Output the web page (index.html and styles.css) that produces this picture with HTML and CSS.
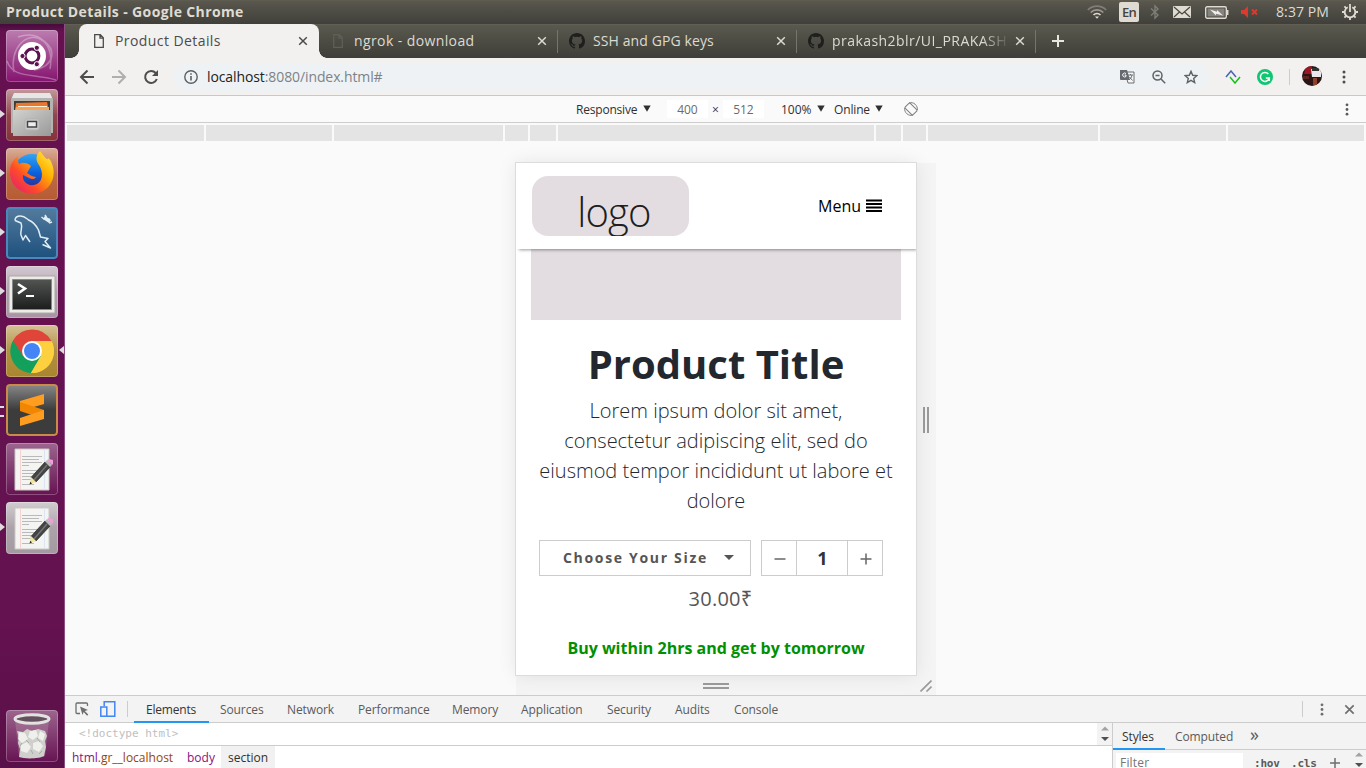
FILE: index.html
```html
<!DOCTYPE html>
<html lang="en">
<head>
<meta charset="utf-8">
<title>Product Details</title>
<link rel="stylesheet" href="styles.css">
</head>
<body>
<svg width="0" height="0" class="defs">
  <defs>
    <linearGradient id="steel" x1="0" y1="0" x2="1" y2="1"><stop offset="0" stop-color="#d2d2d0"/><stop offset="1" stop-color="#999"/></linearGradient>
    <linearGradient id="fox" x1="1" y1="0" x2="0" y2="1"><stop offset="0" stop-color="#fff44f"/><stop offset=".35" stop-color="#ffb000"/><stop offset=".65" stop-color="#ff4a2a"/><stop offset="1" stop-color="#e0167e"/></linearGradient>
    <linearGradient id="globe" x1="0" y1="0" x2="0" y2="1"><stop offset="0" stop-color="#2fa4f4"/><stop offset=".5" stop-color="#0a62dd"/><stop offset="1" stop-color="#3a1a7c"/></linearGradient>
    <linearGradient id="screen" x1="0" y1="0" x2="0" y2="1"><stop offset="0" stop-color="#525452"/><stop offset="1" stop-color="#1c1e1d"/></linearGradient>
    <clipPath id="logoClip"><rect width="157" height="60" rx="16"/></clipPath>
    <symbol id="x" viewBox="0 0 10 10"><path d="M1.2 1.2l7.6 7.6M8.8 1.2L1.2 8.8" stroke="currentColor" stroke-width="1.5"/></symbol>
    <symbol id="page" viewBox="0 0 12 16"><path d="M1.7 1.7h5.6l3 3v9.6H1.7zM7 1.7v3.4h3.4" fill="none" stroke="currentColor" stroke-width="1.3"/></symbol>
    <symbol id="github" viewBox="0 0 16 16"><path fill="#1f1f1e" d="M8 0C3.58 0 0 3.58 0 8c0 3.54 2.29 6.53 5.47 7.59.4.07.55-.17.55-.38 0-.19-.01-.82-.01-1.49-2.01.37-2.53-.49-2.69-.94-.09-.23-.48-.94-.82-1.13-.28-.15-.68-.52-.01-.53.63-.01 1.08.58 1.23.82.72 1.21 1.87.87 2.33.66.07-.52.28-.87.51-1.07-1.78-.2-3.64-.89-3.64-3.95 0-.87.31-1.59.82-2.15-.08-.2-.36-1.02.08-2.12 0 0 .67-.21 2.2.82a7.6 7.6 0 014 0c1.53-1.04 2.2-.82 2.2-.82.44 1.1.16 1.92.08 2.12.51.56.82 1.27.82 2.15 0 3.07-1.87 3.75-3.65 3.95.29.25.54.73.54 1.48 0 1.07-.01 1.93-.01 2.2 0 .21.15.46.55.38A8 8 0 0016 8c0-4.42-3.58-8-8-8z"/></symbol>
    <symbol id="dots" viewBox="0 0 4 14"><circle cx="2" cy="2" r="1.5" fill="currentColor"/><circle cx="2" cy="7" r="1.5" fill="currentColor"/><circle cx="2" cy="12" r="1.5" fill="currentColor"/></symbol>
    <symbol id="down" viewBox="0 0 8 7"><path d="M.3.5h7.4L4 6.8z" fill="currentColor"/></symbol>
    <symbol id="gedit" viewBox="0 0 52 52">
      <path d="M9 6h34v41H9z" fill="#f4f4f2" stroke="#c9c9c5"/>
      <path d="M14.500 6v41" stroke="#f6d3d0"/><path d="M38.500 6v41" stroke="#dbe5f3"/>
      <path d="M16 13.500h20M16 16.500h17M16 19.500h20M16 22.500h7M16 27.500h19M16 30.500h14M16 33.500h12M16 36.500h9M16 41.500h12" stroke="#b9b9b9"/>
      <path d="M25 34.500L39 19l5 5-14 15z" fill="#444" stroke="#222" stroke-width=".7"/><path d="M28 37l13-15" stroke="#777" stroke-width="1.300"/>
      <path d="M25 34l5 5-6.500 2.500z" fill="#f1e49c"/><path d="M23.500 41.500l2.500-1-1.700-1.700z" fill="#222"/>
      <path d="M39 19l2-2 5 5-2 2z" fill="#bbb"/><path d="M41 17l2-1 4 1 0 4-1 1z" fill="#ef9fd8"/>
    </symbol>
  </defs>
</svg>

<header class="panel">
  <span class="panel-title">Product Details - Google Chrome</span>
  <div class="indicators">
    <svg class="wifi" viewBox="0 0 20 14" fill="none" stroke-width="1.700"><path d="M.8 5a13 13 0 0118.400 0" stroke="#7f7d77"/><path d="M3.700 7.500a9 9 0 0112.600 0" stroke="#9c9a93"/><path d="M6.500 10a5 5 0 017 0" stroke="#dfdbd2"/><path d="M8 11.600h4L10 13.800z" fill="#dfdbd2" stroke="none"/></svg>
    <span class="lang">En</span>
    <svg class="bt" viewBox="0 0 10 16" fill="none" stroke="#7f7d77" stroke-width="1.400"><path d="M1 4.500l7 6.500-3 3V2l3 3-7 6.500"/></svg>
    <svg class="mail" viewBox="0 0 18 12"><rect width="18" height="12" rx="1" fill="#dfdbd2"/><path d="M1 1l8 7 8-7M1 11l5.500-5M17 11l-5.500-5" fill="none" stroke="#484740" stroke-width="1.200"/></svg>
    <svg class="battery" viewBox="0 0 24 13"><rect x=".7" y=".7" width="20.600" height="11.600" rx="1.500" fill="none" stroke="#dfdbd2" stroke-width="1.400"/><rect x="2.500" y="2.500" width="17" height="8" fill="#85837b"/><path d="M22.700 4v5" stroke="#dfdbd2" stroke-width="1.500"/><path d="M5 3.500l7 2.200V4l6 5.500-7-1.700v1.700z" fill="#eee"/></svg>
    <svg class="mute" viewBox="0 0 18 12"><path d="M0 4h3l4-4v12L3 8H0z" fill="#df382c"/><path d="M11 3.500l5 5M16 3.500l-5 5" stroke="#df382c" stroke-width="1.900"/></svg>
    <span class="clock">8:37 PM</span>
    <svg class="gear" viewBox="0 0 16 16" fill="none" stroke="#dfdbd2"><path d="M5.600 3.200A5.300 5.300 0 108 2.700" stroke-width="0"/><path d="M5.700 3.300a5.300 5.300 0 104.600 0" stroke-width="1.800"/><path d="M8 0v8M8 13v3M0 8h3M13 8h3M2.400 2.400l2 2M13.600 2.400l-2 2M2.400 13.600l2-2M13.600 13.600l-2-2" stroke-width="1.800"/></svg>
  </div>
</header>

<div class="desktop">
  <nav class="launcher">
    <div class="app dash"><svg viewBox="0 0 52 52"><g fill="none" stroke="#fff" opacity=".3" stroke-width="1.500"><path d="M8 42C3 20 20 0 36 10s12 26-8 30"/><path d="M1 31c6 18 26 12 49 19M12 7c24-8 36 10 32 32"/></g><circle cx="26" cy="26" r="14" fill="#fff"/><circle cx="26" cy="26" r="6.900" fill="none" stroke="#5e1150" stroke-width="3"/><g fill="#5e1150" stroke="#fff" stroke-width="1"><circle cx="16.500" cy="26" r="2.600"/><circle cx="30.800" cy="17.800" r="2.600"/><circle cx="30.800" cy="34.200" r="2.600"/></g></svg></div>
    <div class="app files running"><svg viewBox="0 0 52 52"><path d="M8 4h36l3 6v34H5V10z" fill="#b4b4b2"/><path d="M8 4h36l2 5H6z" fill="#e6e6e4"/><path d="M8 12h36v10H8z" fill="#413a35"/><path d="M10 14l31-1 2 9H9z" fill="#e9772e"/><path d="M10 18h33v4H9z" fill="#f6a65b"/><path d="M12 17.500h29" stroke="#fff3df"/><path d="M7 21h38v26H7z" fill="url(#steel)"/><rect x="19" y="30" width="14" height="11" rx="2" fill="#ccc" stroke="#b3b3b3"/><rect x="21.500" y="32.500" width="9" height="5.500" fill="#eee" stroke="#444" stroke-width="1.500"/></svg></div>
    <div class="app firefox running"><svg viewBox="0 0 52 52"><circle cx="26" cy="25" r="19" fill="url(#globe)"/><path d="M34 3c-5 5-4 10-1 14 5 8 4 18-5 20-7 1-12-4-11-10l6 3c3 2 6 1 7-1-4 0-7-3-9-4l4-7c-4-4-9-4-12-2-1-2-1-5-1-8C5 13 2 22 5 31c4 12 18 18 30 13 12-5 15-18 11-28-1-4-3-5-4-6 0 3-3 0-8-7z" fill="url(#fox)"/></svg></div>
    <div class="app mysql running"><svg viewBox="0 0 52 52" fill="none" stroke="#dfeef7" stroke-width="1.500" stroke-linejoin="round"><path d="M9 13.500c0-3 2.500-4.500 5.500-4.500 4 0 6 2.500 8 4 5 2 8 6 10 10l2 7 7.500 1.500-3 3 5.500 6.500-8-3.500"/><path d="M9 13.500l6 2.500c2 4-1 8 0 12l2 5 2.500-4.500L24 35"/><path d="M38 10.500l6 4" stroke-width="3.500"/><path d="M35.500 10l2.500 2 2.500-1.500L39 8M42 13l1.500-1.500M43 16l3-1" stroke-width="1.500"/></svg></div>
    <div class="app term running"><svg viewBox="0 0 52 52"><path d="M3 10h46v37H3z" fill="#ecebe8" stroke="#aaa9a5"/><path d="M6.500 13.500h39v30h-39z" fill="url(#screen)" stroke="#888"/><path d="M12 18l7 4.500-7 5" fill="none" stroke="#fff" stroke-width="2.600"/><path d="M20 30h8" stroke="#fff" stroke-width="2"/></svg></div>
    <div class="app chrome running focused"><svg viewBox="0 0 52 52"><path d="M26 26L7 15.500A22 22 0 0145.500 16z" fill="#e0453a"/><path d="M26 26l19.500-10A22 22 0 0125 48z" fill="#fdd03f"/><path d="M26 26l-1 22A22 22 0 017 15.500z" fill="#12a05c"/><path d="M7 15.500l10 15.500 9-15z" fill="#e0453a"/><path d="M26 16h19.500L36 29z" fill="#fdd03f"/><path d="M17 31l8 17 10-17z" fill="#12a05c"/><path d="M25 48l10-17V18l10.500-2A22 22 0 0125 48z" fill="#fdd03f"/><circle cx="26" cy="26" r="10" fill="#fff"/><circle cx="26" cy="26" r="8" fill="#4385f4"/></svg></div>
    <div class="app sublime multi"><svg viewBox="0 0 52 52"><path d="M14 17l24-7v10l-24 7z" fill="#ff9d20"/><path d="M14 18l24 8v9l-24-8z" fill="#f18700"/><path d="M14 34l24-8v9l-24 7z" fill="#ff9d20"/></svg></div>
    <div class="app note"><svg viewBox="0 0 52 52"><use href="#gedit"/></svg></div>
    <div class="app note-open running"><svg viewBox="0 0 52 52"><use href="#gedit"/></svg></div>
    <div class="app trash"><svg viewBox="0 0 52 52"><path d="M9 10l4 36c4 3 22 3 26 0l4-36z" fill="#d9cbd8" opacity=".22"/><path d="M11 21l6 1 4-3 5 2 6-2 7 2 2 5-2 5 1 6-2 9c-5 3-20 3-25 1l1-8-2-6 1-5z" fill="#cfd0cb"/><g fill="#efefec"><path d="M13 22l6 1 3 6-6 4-4-4zM24 21l6-1 2 6-5 4-5-3zM34 21l5 3-2 7-5-3zM15 35l6-3 4 5-4 6-6-2zM27 33l6-2 4 5-4 6-6-3z"/></g><path d="M20 30l3 3M31 28l3 4M25 40l2 4M16 33l-2 3M36 41l-3 3" stroke="#a9aaa6"/><ellipse cx="26" cy="9" rx="17" ry="4.200" fill="#64505f" stroke="#e2e2df" stroke-width="3"/></svg></div>
  </nav>

  <main class="browser">
    <div class="tabs">
      <div class="tab active"><span class="fav"><svg class="pg" viewBox="0 0 12 16"><use href="#page"/></svg></span><span class="tab-name n1">Product Details</span><svg class="close"><use href="#x"/></svg></div>
      <div class="tab no-sep dim"><span class="fav"><svg class="pg" viewBox="0 0 12 16"><use href="#page"/></svg></span><span class="tab-name n2">ngrok - download</span><svg class="close"><use href="#x"/></svg></div>
      <div class="tab"><span class="fav"><svg class="gh"><use href="#github"/></svg></span><span class="tab-name n3">SSH and GPG keys</span><svg class="close"><use href="#x"/></svg></div>
      <div class="tab"><span class="fav"><svg class="gh"><use href="#github"/></svg></span><span class="tab-name faded">prakash2blr/UI_PRAKASH</span><svg class="close"><use href="#x"/></svg></div>
      <div class="new-tab"><svg viewBox="0 0 12 12"><path d="M6 0v12M0 6h12" stroke="#e8e6df" stroke-width="2"/></svg></div>
    </div>

    <div class="toolbar">
      <svg class="nav-i" viewBox="0 0 16 16" fill="none" stroke="#4d4d4d" stroke-width="2"><path d="M15 8H2M8.500 1.500L2 8l6.500 6.500"/></svg>
      <svg class="nav-i" viewBox="0 0 16 16" fill="none" stroke="#b0afac" stroke-width="2"><path d="M1 8h13M7.500 1.500L14 8l-6.500 6.500"/></svg>
      <svg class="nav-i" viewBox="0 0 16 16" fill="none" stroke="#4d4d4d" stroke-width="2"><path d="M13.800 10A6 6 0 1112.700 4L14 5.500"/><path d="M15 1v6H9z" fill="#4d4d4d" stroke="none"/></svg>
      <div class="omnibox">
        <svg class="info" viewBox="0 0 14 14"><circle cx="7" cy="7" r="6.200" fill="none" stroke="#5c6064" stroke-width="1.400"/><path d="M7 6v4.500M7 3.200v1.600" stroke="#5c6064" stroke-width="1.600"/></svg>
        <span class="url">localhost<span class="path">:8080/index.html#</span></span>
        <svg class="trans" viewBox="0 0 15 15"><path d="M5 3h9v11H8z" fill="#f5f6f6" stroke="#6b6f73"/><path d="M0 1h7l3 10H1a1 1 0 01-1-1z" fill="#66696d"/><path d="M8 6h5M10.500 5v1M12 6c-.5 3-2 4-3 5M9.500 8l3 3.500" stroke="#6b6f73" fill="none"/><path d="M6 4.500a2 2 0 100 3V6H4.500" fill="none" stroke="#fff"/></svg>
        <svg class="mag" viewBox="0 0 14 14" fill="none" stroke="#5f6368" stroke-width="1.500"><circle cx="5.500" cy="5.500" r="4.500"/><path d="M9 9l4.200 4.200M3.500 5.500h4"/></svg>
        <svg class="star" viewBox="0 0 14 14" fill="none" stroke="#5f6368" stroke-width="1.400"><path d="M7 1.300l1.700 4 4.200.3-3.200 2.800 1 4.200L7 10.300l-3.700 2.300 1-4.200L1.100 5.600l4.200-.3z"/></svg>
      </div>
      <svg class="ext" viewBox="0 0 16 14" fill="none" stroke-width="1.500"><path d="M1 7l5-6 5 6" stroke="#4a62b5"/><path d="M5 7l5 6 5-6" stroke="#13c313"/></svg>
      <svg class="gram" viewBox="0 0 16 16"><circle cx="8" cy="8" r="8" fill="#0fc671"/><path d="M11.400 5A4.500 4.500 0 1012.300 9H8.800M12.300 8.500v3.500" fill="none" stroke="#fff" stroke-width="1.500"/></svg>
      <i class="bar"></i>
      <svg class="avatar" viewBox="0 0 20 20"><clipPath id="av"><circle cx="10" cy="10" r="10"/></clipPath><g clip-path="url(#av)"><path d="M0 0h20v20H0z" fill="#2a1414"/><path d="M4 0h6v8H2z" fill="#9c1624"/><path d="M9 3h10v8H10z" fill="#e9e6ec"/><path d="M10 2h7v3h-7z" fill="#333"/><path d="M11 12h4v7h-4z" fill="#8e4028"/><path d="M1 10h6v3H1z" fill="#5c2320"/></g></svg>
      <svg class="kebab"><use href="#dots"/></svg>
    </div>

    <div class="device-bar">
      <span class="d-mode">Responsive</span><svg class="tri"><use href="#down"/></svg>
      <span class="dim-box first">400</span><span class="times">×</span><span class="dim-box">512</span>
      <span class="d-zoom">100%</span><svg class="tri"><use href="#down"/></svg>
      <span class="d-net">Online</span><svg class="tri"><use href="#down"/></svg>
      <svg class="rotate" viewBox="0 0 14 14" fill="none" stroke="#7e7e7e"><rect x="3.500" y="1.500" width="7" height="11" rx="1" transform="rotate(-45 7 7)"/><path d="M5 .9A6.500 6.500 0 0113.300 8M9 13.100A6.500 6.500 0 01.7 6"/></svg>
      <svg class="d-dots"><use href="#dots"/></svg>
    </div>
    <div class="ruler"><i></i><i></i><i></i><i></i><i></i><i></i><i></i><i></i><i></i><i></i><i></i></div>

    <div class="stage">
      <div class="phone">
        <div class="site-head">
          <svg class="logo" viewBox="0 0 157 60"><g clip-path="url(#logoClip)"><rect width="157" height="60" fill="#e3dde1"/><text x="82" y="51" text-anchor="middle" class="logo-text">logo</text></g></svg>
          <span class="menu">Menu<svg viewBox="0 0 16 13"><path d="M0 1.500h16M0 5h16M0 8.500h16M0 12h16" stroke="#000" stroke-width="2"/></svg></span>
        </div>
        <div class="hero"></div>
        <h1>Product Title</h1>
        <p class="lead">Lorem ipsum dolor sit amet,<br>consectetur adipiscing elit, sed do<br>eiusmod tempor incididunt ut labore et<br>dolore</p>
        <div class="buy-row">
          <div class="size"><span>Choose Your Size</span><i class="caret"></i></div>
          <div class="qty"><span><svg viewBox="0 0 12 12"><path d="M.5 6h11" stroke="#666" stroke-width="1.500"/></svg></span><b>1</b><span><svg viewBox="0 0 12 12"><path d="M.5 6h11M6 .5v11" stroke="#666" stroke-width="1.500"/></svg></span></div>
        </div>
        <div class="price">30.00₹</div>
        <div class="promo">Buy within 2hrs and get by tomorrow</div>
      </div>
      <div class="grip-r"><i></i></div>
      <div class="grip-b"><i></i></div>
      <div class="grip-c"><svg viewBox="0 0 12 12" stroke="#999" stroke-width="1.600"><path d="M.5 11.500l11-11M6.500 11.500l5-5"/></svg></div>
    </div>

    <div class="devtools">
      <div class="dt-bar">
        <svg class="inspect" viewBox="0 0 14 14"><path d="M5 11.500H2a1 1 0 01-1-1V2a1 1 0 011-1h9.500a1 1 0 011 1v2" fill="none" stroke="#6e6e6e" stroke-width="1.300"/><path d="M5 4.500l8 3.500-3.200 1 3.500 3.500-1.200 1.200L8.700 10 7.500 13z" fill="#6e6e6e"/></svg>
        <svg class="toggle" viewBox="0 0 16 16" fill="none" stroke="#4285f4" stroke-width="1.500"><path d="M4.200 5V.8h10.600v14.400H7"/><rect x=".8" y="6" width="6" height="9.200"/></svg>
        <i class="vsep"></i>
        <span class="t-el on">Elements</span><span class="t-so">Sources</span><span class="t-ne">Network</span><span class="t-pe">Performance</span><span class="t-me">Memory</span><span class="t-ap">Application</span><span class="t-se">Security</span><span class="t-au">Audits</span><span class="t-co">Console</span>
        <i class="vsep right"></i><svg class="dt-dots"><use href="#dots"/></svg><svg class="dt-x"><use href="#x"/></svg>
      </div>
      <div class="dt-body">
        <div class="dom">
          <div class="doctype"><code>&lt;!doctype html&gt;</code><div class="scroll"><svg viewBox="0 0 8 16"><path d="M0 4.500L4 .5l4 4z" fill="#a3a3a3"/><path d="M0 11l4 4 4-4z" fill="#505050"/></svg></div></div>
          <div class="crumbs"><span class="c1"><em>html</em>.gr__localhost</span><span class="c2">body</span><span class="c3">section</span></div>
        </div>
        <div class="side">
          <div class="side-tabs"><span class="s1">Styles</span><span class="s2">Computed</span><span class="s3">»</span></div>
          <div class="filter"><span class="field">Filter</span><code class="hov">:hov</code><code class="cls">.cls</code><svg class="plus" viewBox="0 0 10 10"><path d="M5 0v10M0 5h10" stroke="#6e6e6e" stroke-width="1.500"/></svg><div class="scroll"><svg viewBox="0 0 8 16"><path d="M0 4.500L4 .5l4 4z" fill="#a3a3a3"/><path d="M0 11l4 4 4-4z" fill="#505050"/></svg></div></div>
        </div>
      </div>
    </div>
  </main>
</div>
</body>
</html>
```
FILE: styles.css
```css
* { box-sizing: border-box; }
body { margin: 0; width: 1366px; height: 768px; overflow: hidden; display: flex; flex-direction: column; font-family: "Open Sans", "Noto Sans", sans-serif; background: #fafafa; }
svg { display: block; flex: none; }
.defs { position: absolute; }
span, code { white-space: nowrap; }

/* desktop panel */
.panel { height: 24px; flex: none; display: flex; align-items: center; justify-content: space-between; padding: 0 8px 0 6px; background: linear-gradient(#605e51 0, #58564d 2px, #403f39); color: #dfdbd2; }
.panel-title { font-weight: 700; font-size: 14px; letter-spacing: .38px; padding-bottom: 2px; }
.indicators { display: flex; align-items: center; }
.wifi { width: 20px; height: 14px; margin-right: 12px; }
.lang { width: 20px; height: 20px; margin-right: 11px; border-radius: 2px; background: #dfdbd2; color: #44433d; font-size: 13px; font-weight: 600; line-height: 20px; text-align: center; letter-spacing: -.7px; }
.bt { width: 10px; height: 16px; margin-right: 13px; }
.mail { width: 18px; height: 12px; margin-right: 14px; }
.battery { width: 24px; height: 13px; margin-right: 12px; }
.mute { width: 18px; height: 12px; margin-right: 17px; }
.clock { width: 66px; font-size: 14px; letter-spacing: .1px; padding-bottom: 2px; }
.gear { width: 16px; height: 16px; }

.desktop { flex: 1; display: flex; min-height: 0; }

/* launcher */
.launcher { width: 65px; flex: none; display: flex; flex-direction: column; gap: 7px; padding: 6px 0 6px 6px; background: linear-gradient(#470b3d, #66114f 8px, #641250 80%, #5a1048); border-right: 1px solid #8c4f80; }
.app { position: relative; width: 52px; height: 52px; border-radius: 4px; background-image: linear-gradient(rgba(255,255,255,.5), rgba(255,255,255,.1) 50%, rgba(255,255,255,0)); box-shadow: inset 0 0 0 1px rgba(255,255,255,.25); }
.app svg { width: 52px; height: 52px; }
.dash { background-color: #85136f; background-image: linear-gradient(rgba(255,255,255,.45), rgba(255,255,255,0)); }
.files { background-color: #85323a; }
.firefox { background-color: #b65b32; }
.mysql { background-color: #1c507d; background-image: linear-gradient(rgba(255,255,255,.25), rgba(255,255,255,0)); box-shadow: inset 0 0 0 2px #4b88bb; }
.term { background-color: #a894a4; }
.chrome { background-color: #a9852e; }
.sublime { background-color: #3c3c3c; background-image: linear-gradient(rgba(255,255,255,.4), rgba(255,255,255,0) 50%); box-shadow: inset 0 0 0 2px #c98a4a; }
.note { background-color: #671352; background-image: linear-gradient(rgba(255,255,255,.35), rgba(255,255,255,0)); }
.note-open { background-color: #a399a1; }
.trash { margin-top: auto; background-color: #671352; background-image: linear-gradient(rgba(255,255,255,.35), rgba(255,255,255,0)); }
.running::before { content: ""; position: absolute; left: -6px; top: 21px; border: solid transparent; border-width: 4px 0 4px 5px; border-left-color: #ddd; }
.focused::after { content: ""; position: absolute; right: -6px; top: 21px; border: solid transparent; border-width: 4px 5px 4px 0; border-right-color: #ddd; }
.multi::before { content: ""; position: absolute; left: -6px; top: 22px; width: 4px; height: 7px; border: solid #ddd; border-width: 2px 0; }

/* browser chrome */
.browser { flex: 1; min-width: 0; display: flex; flex-direction: column; }
.tabs { height: 34px; flex: none; display: flex; padding-left: 15px; background: linear-gradient(#69665a 0, #5a594f 1px, #3e3e38); color: #dcdad2; }
.tab { position: relative; width: 239px; display: flex; align-items: center; font-size: 14px; border-right: 1px solid #76746b; border-image: linear-gradient(transparent 7px, #76746b 7px, #76746b 28px, transparent 28px) 1; }
.tab.active { margin-left: -1px; width: 240px; padding-left: 1px; background: #f2f1f0; color: #4b4b4b; border: 0; border-radius: 8px 8px 0 0; }
.active::before, .active::after { content: ""; position: absolute; bottom: 0; width: 8px; height: 8px; }
.active::before { left: -8px; background: radial-gradient(circle at 0 0, transparent 7.5px, #f2f1f0 8px); }
.active::after { right: -8px; background: radial-gradient(circle at 100% 0, transparent 7.5px, #f2f1f0 8px); }
.fav { width: 35px; flex: none; padding-left: 11px; }
.pg { width: 12px; height: 16px; margin-left: 2px; }
.dim .pg { color: #5f5e57; }
.gh { width: 16px; height: 16px; }
.tab-name { width: 175px; overflow: hidden; padding-bottom: 2px; letter-spacing: .1px; }
.n1 { letter-spacing: .42px; }
.n2 { letter-spacing: .4px; }
.faded { letter-spacing: .45px; -webkit-mask-image: linear-gradient(90deg, #000 150px, transparent 178px); mask-image: linear-gradient(90deg, #000 150px, transparent 178px); }
.close { width: 10px; height: 10px; margin-left: 8px; }
.new-tab { padding: 11px 0 0 16px; }
.new-tab svg { width: 12px; height: 12px; }
.toolbar { height: 38px; flex: none; display: flex; align-items: center; padding-left: 14px; background: #f2f1f0; border-bottom: 1px solid #c8c8c7; }
.nav-i { width: 16px; height: 16px; margin-right: 16px; }
.omnibox { width: 1036px; height: 28px; margin-left: -2px; display: flex; align-items: center; border-radius: 14px; background: #eef2f4; padding-left: 11px; }
.info { width: 14px; height: 14px; }
.url { width: 913px; margin-left: 9px; font-size: 14px; letter-spacing: -.1px; color: #222; }
.path { color: #7d8288; }
.trans { width: 15px; height: 15px; margin-right: 17px; }
.mag { width: 14px; height: 14px; margin-right: 18px; }
.star { width: 14px; height: 14px; }
.ext { width: 16px; height: 14px; margin-left: 16px; }
.gram { width: 16px; height: 16px; margin-left: 16px; }
.bar { width: 1px; height: 16px; background: #ccc; margin: 0 12px 0 16px; }
.avatar { width: 20px; height: 20px; margin-top: -2px; }
.kebab { width: 4px; height: 14px; margin-left: 20px; color: #4d4d4d; }

/* responsive-mode bar and ruler */
.device-bar { height: 27px; flex: none; display: flex; align-items: center; padding-left: 511px; background: #fafafa; border-bottom: 1px solid #cdcdcd; font-size: 12px; color: #303030; }
.tri { width: 8px; height: 7px; margin-top: -2px; }
.d-mode { width: 67px; letter-spacing: -.2px; }
.dim-box { width: 41px; height: 18px; line-height: 19px; background: #fff; color: #6b6b6b; text-align: center; letter-spacing: -.1px; }
.dim-box.first { margin-left: 16px; }
.times { width: 15px; text-align: center; }
.d-zoom { width: 36px; margin-left: 17px; letter-spacing: 0; }
.d-net { width: 41px; margin-left: 9px; letter-spacing: -.15px; }
.rotate { width: 14px; height: 14px; margin-left: 21px; }
.d-dots { width: 4px; height: 13px; margin-left: 427px; color: #5a5a5a; }
.ruler { height: 16px; flex: none; margin: 2px 2px 0; display: grid; gap: 2px; grid-template-columns: 137px 126px 169px 23px 26px 316px 25px 23px 170px 126px 136px; }
.ruler i { background: #e4e4e4; }

/* device stage */
.stage { flex: 1; min-height: 0; display: grid; grid-template: 512px 20px / 400px 20px; padding: 22px 0 0 451px; background: #fafafa; }
.phone { background: #fff; box-shadow: 0 0 0 1px #dcdcdc, 0 0 18px rgba(0,0,0,.09); display: flex; flex-direction: column; color: #555; z-index: 1; }
.grip-r, .grip-b, .grip-c { background: #f4f4f4; display: flex; align-items: center; justify-content: center; padding-top: 2px; }
.grip-r i { width: 6px; height: 26px; border: solid #9b9b9b; border-width: 0 2px; }
.grip-b { height: 20px; }
.grip-b i { width: 26px; height: 6px; border: solid #9b9b9b; border-width: 2px 0; }
.grip-c svg { width: 12px; height: 12px; }
.grip-c { height: 20px; padding-top: 1px; }
.site-head { height: 86px; flex: none; display: flex; justify-content: space-between; align-items: flex-start; padding: 13px 34px 0 16px; background: #fff; box-shadow: 2px 2px 3px -1px rgba(0,0,0,.4); clip-path: inset(0 0 -6px 0); z-index: 1; }
.logo { width: 157px; height: 60px; }
.logo-text { font: 300 40px "Open Sans", sans-serif; fill: #211d20; letter-spacing: -.8px; }
.menu { display: flex; align-items: center; gap: 5px; margin-top: 18px; color: #000; font-size: 16px; line-height: 24px; }
.menu svg { width: 16px; height: 13px; margin-top: -2px; }
.hero { height: 71px; flex: none; margin: 0 15px; background: #e3dde1; }
h1 { margin: 20px 0 0; font-size: 40px; line-height: 48px; font-weight: 700; color: #23282e; text-align: center; }
.lead { margin: 8px 0 0; font-size: 20px; line-height: 30px; font-weight: 300; color: #23282e; text-align: center; white-space: nowrap; }
.buy-row { display: flex; gap: 10px; margin: 24px 0 0 23px; height: 36px; }
.size { width: 212px; border: 1px solid #ccc; display: flex; align-items: center; padding-left: 23px; font-size: 14px; font-weight: 700; letter-spacing: 1.68px; }
.size span { width: 161px; padding-bottom: 2px; }
.caret { border: solid transparent; border-width: 5px 5px 0; border-top-color: #555; margin-top: -2px; }
.qty { width: 122px; border: 1px solid #ccc; display: grid; grid-template-columns: 34px 52px 34px; align-items: stretch; }
.qty > * { display: flex; align-items: center; justify-content: center; padding: 1px 0 0 1px; }
.qty b { border: solid #ccc; border-width: 0 1px; font-size: 18px; color: #333; padding-top: 0; }
.qty svg { width: 12px; height: 12px; }
.price { margin: 8px 0 0 9px; font-size: 20px; line-height: 30px; text-align: center; letter-spacing: .25px; }
.promo { margin-top: 22px; font-size: 16px; line-height: 24px; font-weight: 700; color: #009000; text-align: center; }

/* devtools */
.devtools { height: 73px; flex: none; border-top: 1px solid #ccc; background: #fff; font-size: 12px; color: #5a5a5a; display: flex; flex-direction: column; }
.dt-bar { height: 27px; flex: none; display: flex; align-items: center; background: #f3f3f3; border-bottom: 1px solid #ccc; padding-left: 10px; }
.dt-bar span { line-height: 27px; letter-spacing: -.1px; padding-left: 1px; flex: none; }
.inspect { width: 14px; height: 14px; }
.toggle { width: 16px; height: 16px; margin-left: 11px; }
.vsep { width: 1px; height: 16px; margin: 0 6px 0 11px; background: #ccc; }
.dt-bar .on { width: 75px; height: 27px; padding-left: 12px; color: #333; border-bottom: 2px solid #2196f3; margin-right: 10px; letter-spacing: -.2px; }
.t-so { width: 67px; } .t-ne { width: 71px; } .t-pe { width: 94px; } .t-me { width: 69px; } .t-ap { width: 86px; } .t-se { width: 68px; } .t-au { width: 59px; } .t-co { width: 56px; }
.vsep.right { margin: 0 17px 0 513px; }
.dt-dots { width: 4px; height: 13px; color: #6e6e6e; }
.dt-x { width: 11px; height: 11px; margin-left: 20px; color: #6e6e6e; }
.dt-body { flex: 1; min-height: 0; display: flex; overflow: hidden; }
.dom { width: 1047px; flex: none; }
.doctype { height: 23px; display: flex; justify-content: space-between; border-bottom: 1px solid #ccc; }
code { font-family: "DejaVu Sans Mono", monospace; font-size: 11px; }
.doctype code { color: #c0c0c0; padding-left: 14px; line-height: 21px; }
.scroll { width: 15px; flex: none; height: 22px; background: #f3f3f3; display: flex; align-items: center; justify-content: center; }
.scroll svg { width: 8px; height: 16px; }
.crumbs { display: flex; height: 22px; line-height: 23px; color: #994500; padding-left: 7px; letter-spacing: 0; }
.crumbs em { font-style: normal; color: #881280; }
.c1 { width: 115px; }
.c2 { width: 34px; color: #881280; }
.c3 { width: 54px; text-align: center; background: #f1f1f1; color: #303030; }
.side { flex: 1; min-width: 0; background: #f3f3f3; border-left: 1px solid #ccc; }
.side-tabs { display: flex; height: 27px; line-height: 27px; border-bottom: 1px solid #ccc; letter-spacing: -.1px; }
.s1 { width: 52px; height: 27px; padding-left: 9px; color: #333; border-bottom: 2px solid #2196f3; }
.s2 { width: 76px; padding-left: 10px; }
.s3 { padding-left: 9px; font-size: 18px; line-height: 23px; }
.filter { display: flex; height: 30px; padding-left: 3px; }
.field { width: 127px; flex: none; height: 27px; margin-top: 3px; padding-left: 4px; background: #fff; line-height: 20px; color: #757575; letter-spacing: .2px; }
.filter code { margin-left: 11px; line-height: 27px; width: 26px; font-weight: 700; letter-spacing: -.2px; }
.plus { width: 10px; height: 10px; margin: 8px 11px 0 13px; }
.filter .scroll { height: 20px; }
```
